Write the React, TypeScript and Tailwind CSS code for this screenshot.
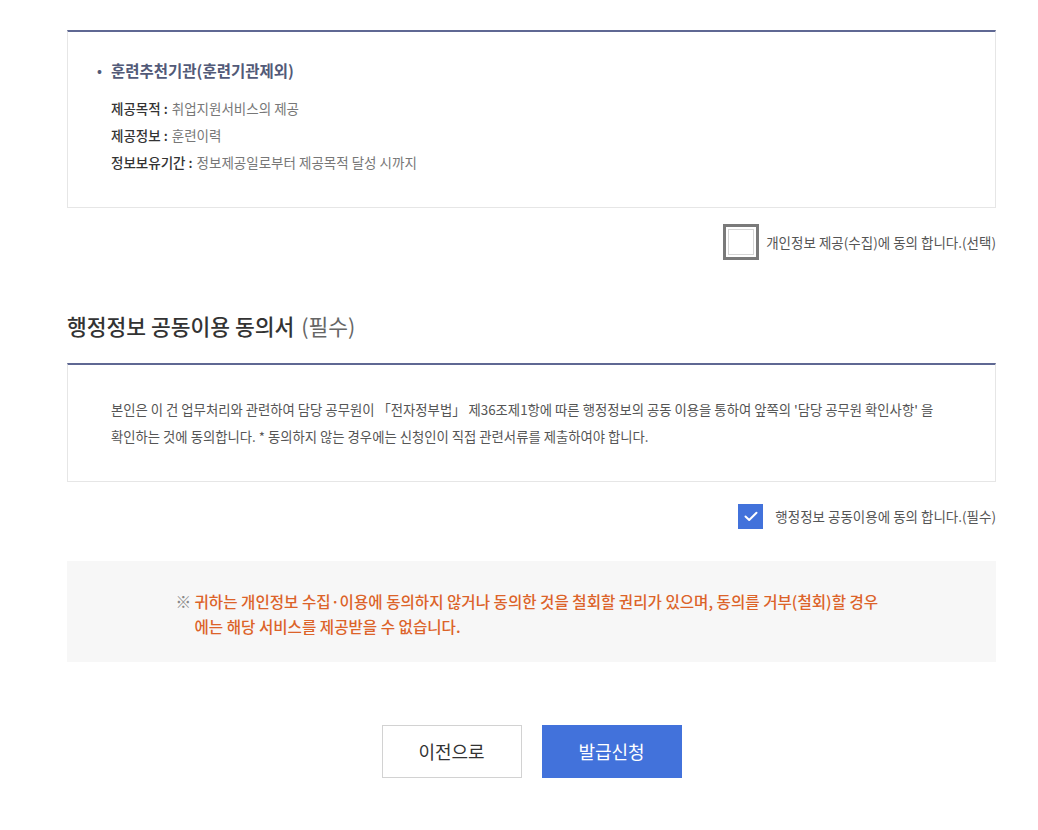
import React from "react";

const FONT = { fontFamily: '"Noto Sans CJK KR", "Noto Sans", sans-serif' };

function DetailLine({ label, value }: { label: string; value: string }) {
  return (
    <div className="flex h-[27px] items-center text-[13.5px]">
      <span className="font-medium text-[#333]">{label} :</span>
      <span className="ml-[4px] text-[#777]">{value}</span>
    </div>
  );
}

function PlainCheck({ label }: { label: string }) {
  return (
    <label className="flex items-center justify-end gap-[7px]">
      <span className="flex h-[36px] w-[36px] items-center justify-center border-[3px] border-[#7a7a7a] bg-white">
        <span className="h-[26px] w-[26px] border border-[#d6d6d6]" />
      </span>
      <span className="text-[13.5px] text-[#555]">{label}</span>
    </label>
  );
}

function CheckedBox({ label }: { label: string }) {
  return (
    <label className="flex items-center justify-end gap-[12px]">
      <span className="flex h-[25px] w-[25px] items-center justify-center bg-[#4272db]">
        <svg width="14" height="11" viewBox="0 0 14 11" fill="none">
          <path d="M1.5 5.5 L5.2 9 L12.5 1.8" stroke="white" strokeWidth="2" strokeLinecap="round" strokeLinejoin="round" />
        </svg>
      </span>
      <span className="text-[13.5px] text-[#555]">{label}</span>
    </label>
  );
}

export default function App() {
  return (
    <div className="min-h-screen bg-white pt-[30px]" style={FONT}>
      <div className="ml-[67px] w-[929px]">
        {/* 개인정보 제공 안내 */}
        <div className="border border-t-2 border-[#e6e6e6] border-t-[#5f6893] pl-[29px] pr-[29px] pt-[28px] pb-[31px]">
          <div className="flex h-[22px] items-center text-[15.5px] font-bold text-[#525a78]">
            <span className="w-[14px] text-[13px]">•</span>
            <span>훈련추천기관(훈련기관제외)</span>
          </div>
          <div className="mt-[13px] pl-[14px]">
            <DetailLine label="제공목적" value="취업지원서비스의 제공" />
            <DetailLine label="제공정보" value="훈련이력" />
            <DetailLine label="정보보유기간" value="정보제공일로부터 제공목적 달성 시까지" />
          </div>
        </div>

        <div className="mt-[16px]">
          <PlainCheck label="개인정보 제공(수집)에 동의 합니다.(선택)" />
        </div>

        <h2 className="mt-[51px] flex h-[30px] items-center text-[21.5px] font-medium text-[#333]">
          행정정보 공동이용 동의서
          <span className="ml-[7px] font-normal text-[#666]">(필수)</span>
        </h2>

        <div className="mt-[22px] border border-t-2 border-[#e6e6e6] border-t-[#5f6893] pl-[43px] pr-[30px] pt-[31px] pb-[31px]">
          <p className="whitespace-nowrap text-[13.35px] leading-[27px] text-[#555]">
            본인은 이 건 업무처리와 관련하여 담당 공무원이 「전자정부법」 제36조제1항에 따른 행정정보의 공동 이용을 통하여 앞쪽의 '담당 공무원 확인사항' 을
            <br />
            확인하는 것에 동의합니다. * 동의하지 않는 경우에는 신청인이 직접 관련서류를 제출하여야 합니다.
          </p>
        </div>

        <div className="mt-[22px]">
          <CheckedBox label="행정정보 공동이용에 동의 합니다.(필수)" />
        </div>

        <div className="mt-[32px] bg-[#f7f7f7] pt-[28px] pb-[23px]">
          <div className="mx-auto flex w-[712px] whitespace-nowrap text-[15.6px] font-medium leading-[25px] text-[#dc6329]">
            <span className="w-[19px] shrink-0 text-[#888]">※</span>
            <p>
              귀하는 개인정보 수집·이용에 동의하지 않거나 동의한 것을 철회할 권리가 있으며, 동의를 거부(철회)할 경우
              <br />
              에는 해당 서비스를 제공받을 수 없습니다.
            </p>
          </div>
        </div>

        <div className="mt-[63px] flex justify-center gap-[20px] pb-[50px]">
          <button className="h-[53px] w-[140px] border border-[#d2d2d2] bg-white text-[18px] text-[#333]">이전으로</button>
          <button className="h-[53px] w-[140px] bg-[#4272db] text-[18px] text-white">발급신청</button>
        </div>
      </div>
    </div>
  );
}
